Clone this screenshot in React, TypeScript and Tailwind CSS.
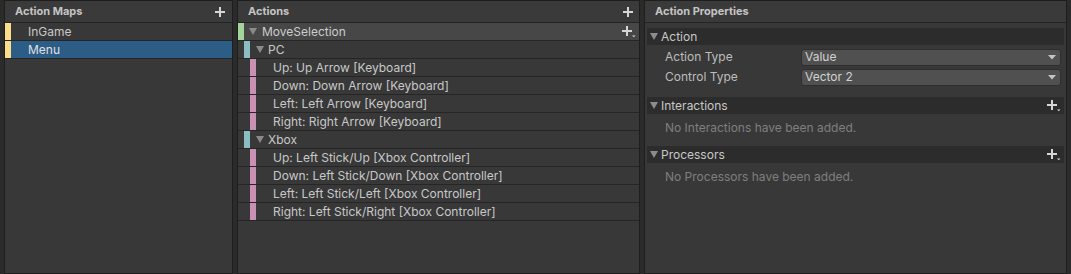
import React from "react";

const Tri = ({ className = "" }: { className?: string }) => (
  <svg width="8" height="7" viewBox="0 0 8 7" className={className}>
    <path d="M0 0 L8 0 L4 7 Z" fill="currentColor" />
  </svg>
);

const Plus = () => (
  <svg width="10" height="10" viewBox="0 0 10 10" className="text-[#d6d6d6]">
    <path d="M4 0h2v4h4v2H6v4H4V6H0V4h4z" fill="currentColor" />
  </svg>
);

const PlusDrop = () => (
  <svg width="14" height="12" viewBox="0 0 14 12" className="text-[#d6d6d6]">
    <path d="M4 0h2v4h4v2H6v4H4V6H0V4h4z" fill="currentColor" />
    <path d="M10 9.5h3.5l-1.75 1.8z" fill="currentColor" />
  </svg>
);

const PanelHeader = ({ title, pl, pr }: { title: string; pl: string; pr: string }) => (
  <div className={`h-[22px] shrink-0 flex items-center justify-between border-b border-[#242424] bg-[#3a3a3a] ${pl} ${pr}`}>
    <span className="font-bold text-[11px] text-[#c4c4c4]">{title}</span>
    <Plus />
  </div>
);

const Binding = ({ text }: { text: string }) => (
  <div className="h-[18px] flex items-stretch border-b border-[#262626]">
    <div className="w-[12px]" />
    <div className="w-[6px] bg-[#c890b3]" />
    <span className="pl-[17px] flex items-center text-[#c8c8c8]">{text}</span>
  </div>
);

const Composite = ({ text }: { text: string }) => (
  <div className="h-[18px] flex items-stretch border-b border-[#262626]">
    <div className="w-[6px]" />
    <div className="w-[6px] bg-[#8cbcc4]" />
    <div className="flex items-center pl-[6px] text-[#8a8a8a]">
      <Tri />
    </div>
    <span className="pl-[4px] flex items-center text-[#c8c8c8]">{text}</span>
  </div>
);

const Dropdown = ({ value }: { value: string }) => (
  <div className="w-[260px] h-[17px] rounded-[3px] bg-[#505050] border border-[#2e2e2e] flex items-center justify-between pl-[3px] pr-[4px] text-[#d0d0d0]">
    <span>{value}</span>
    <svg width="8" height="5" viewBox="0 0 8 5" className="text-[#c4c4c4]">
      <path d="M0 0 L8 0 L4 4.5 Z" fill="currentColor" />
    </svg>
  </div>
);

const Foldout = ({ title, plus }: { title: string; plus?: boolean }) => (
  <div className="h-[17px] bg-[#2c2c2c] flex items-center justify-between pl-[3px] pr-[3px]">
    <div className="flex items-center">
      <span className="text-[#8c8c8c] flex items-center">
        <Tri />
      </span>
      <span className="pl-[3px] text-[#c8c8c8]">{title}</span>
    </div>
    {plus ? <PlusDrop /> : null}
  </div>
);

export default function App() {
  return (
    <div
      className="w-[1071px] h-[274px] bg-[#2b2b2b] flex gap-[4px] px-[4px] overflow-hidden text-[12px] leading-none text-[#c4c4c4]"
      style={{ fontFamily: "Inter, 'Noto Sans', sans-serif" }}
    >
      {/* Action Maps */}
      <div className="w-[229px] h-full flex flex-col bg-[#383838] border border-[#1e1e1e]">
        <PanelHeader title="Action Maps" pl="pl-[10px]" pr="pr-[7px]" />
        <div className="h-[18px] flex items-stretch border-b border-[#262626]">
          <div className="w-[6px] bg-[#fbdd8b]" />
          <span className="pl-[17px] flex items-center text-[#c8c8c8]">InGame</span>
        </div>
        <div className="h-[18px] flex items-stretch border-b border-[#262626] bg-[#2c5d87]">
          <div className="w-[6px] bg-[#fbdd8b]" />
          <span className="pl-[17px] flex items-center text-[#e0e0e0]">Menu</span>
        </div>
      </div>

      {/* Actions */}
      <div className="w-[403px] h-full flex flex-col bg-[#383838] border border-[#1e1e1e]">
        <PanelHeader title="Actions" pl="pl-[10px]" pr="pr-[6px]" />
        <div className="h-[18px] flex items-stretch justify-between border-b border-[#262626] bg-[#474747]">
          <div className="flex items-stretch">
            <div className="w-[6px] bg-[#a4d49a]" />
            <div className="flex items-center pl-[5px] text-[#8a8a8a]">
              <Tri />
            </div>
            <span className="pl-[5px] flex items-center text-[#cccccc]">MoveSelection</span>
          </div>
          <div className="flex items-center pr-[3px]">
            <PlusDrop />
          </div>
        </div>
        <Composite text="PC" />
        <Binding text="Up: Up Arrow [Keyboard]" />
        <Binding text="Down: Down Arrow [Keyboard]" />
        <Binding text="Left: Left Arrow [Keyboard]" />
        <Binding text="Right: Right Arrow [Keyboard]" />
        <Composite text="Xbox" />
        <Binding text="Up: Left Stick/Up [Xbox Controller]" />
        <Binding text="Down: Left Stick/Down [Xbox Controller]" />
        <Binding text="Left: Left Stick/Left [Xbox Controller]" />
        <Binding text="Right: Left Stick/Right [Xbox Controller]" />
      </div>

      {/* Action Properties */}
      <div className="w-[423px] h-full flex flex-col bg-[#383838] border border-[#1e1e1e]">
        <div className="h-[22px] shrink-0 flex items-center border-b border-[#242424] bg-[#3a3a3a] pl-[10px]">
          <span className="font-bold text-[11px] text-[#c4c4c4]">Action Properties</span>
        </div>
        <div className="flex flex-col px-[2px] pt-[5px]">
          <Foldout title="Action" />
          <div className="mt-[4px] h-[16px] flex items-center justify-between pl-[18px] pr-[3px]">
            <span className="text-[#bdbdbd]">Action Type</span>
            <Dropdown value="Value" />
          </div>
          <div className="mt-[4px] h-[16px] flex items-center justify-between pl-[18px] pr-[3px]">
            <span className="text-[#bdbdbd]">Control Type</span>
            <Dropdown value="Vector 2" />
          </div>
          <div className="mt-[12px]">
            <Foldout title="Interactions" plus />
          </div>
          <div className="mt-[6px] h-[16px] flex items-center pl-[18px] text-[#7f7f7f]">
            No Interactions have been added.
          </div>
          <div className="mt-[10px]">
            <Foldout title="Processors" plus />
          </div>
          <div className="mt-[6px] h-[16px] flex items-center pl-[18px] text-[#7f7f7f]">
            No Processors have been added.
          </div>
        </div>
      </div>
    </div>
  );
}
